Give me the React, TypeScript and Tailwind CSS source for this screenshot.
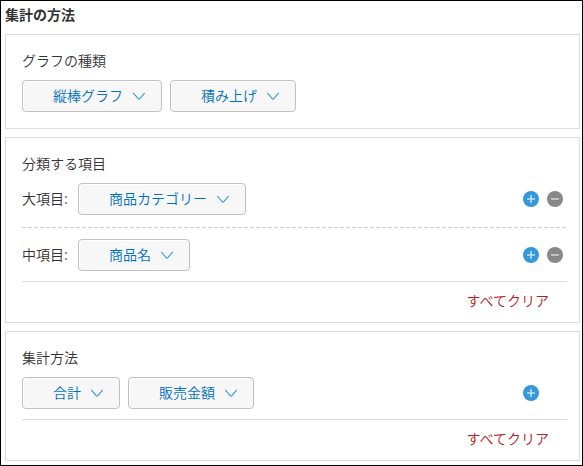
import React from 'react';

interface DropdownProps {
  /** Accessible name of the drop-down */
  label: string;
  /** Text of the selected option */
  value: string;
  id?: string;
}

/** Drop-down with a blue label and a thin chevron */
const Dropdown: React.FC<DropdownProps> = ({ label, value, id }) => (
  <div className="relative">
    <select
      id={id}
      aria-label={label}
      className="block h-8 appearance-none rounded-sm border border-[#c1c1c1] bg-[#f7f7f7] pr-[38px] pb-0.5 pl-[30px] text-sm text-[#0070c0] shadow-[inset_1px_1px_1px_#fff]"
    >
      <option>{value}</option>
    </select>
    <svg
      className="pointer-events-none absolute top-3 right-[17px] h-2 w-3"
      viewBox="0 0 12 8"
      fill="none"
      stroke="#3498db"
      strokeWidth="1.1"
      aria-hidden="true"
    >
      <path d="M0.4 1 L5.2 6.7 Q6 7.6 6.8 6.7 L11.6 1" />
    </svg>
  </div>
);

/** Round button that adds a row */
const AddButton: React.FC = () => (
  <button type="button" aria-label="追加" className="block">
    <svg className="size-4" viewBox="0 0 16 16" aria-hidden="true">
      <circle cx="8" cy="8" r="8" fill="#3498db" />
      <path d="M4 8H12M8 4V12" stroke="#c5e1f5" strokeWidth="1.6" />
    </svg>
  </button>
);

/** Round button that removes a row */
const RemoveButton: React.FC = () => (
  <button type="button" aria-label="削除" className="block">
    <svg className="size-4" viewBox="0 0 16 16" aria-hidden="true">
      <circle cx="8" cy="8" r="8" fill="#888" />
      <path d="M4 8H12" stroke="#d4d4d4" strokeWidth="1.6" />
    </svg>
  </button>
);

interface PanelProps {
  headline: string;
  children: React.ReactNode;
}

const Panel: React.FC<PanelProps> = ({ headline, children }) => (
  <section className="border border-[#dcdcdc] pt-4 pr-3 pl-4">
    <h2 className="mb-[10px] leading-[19px]">{headline}</h2>
    {children}
  </section>
);

/** Footer of a panel with the link that resets all of its rows */
const ClearAll: React.FC = () => (
  <div className="mt-[10px] flex h-[41px] items-center justify-end border-t border-[#dcdcdc] pr-[18px] pb-1">
    <a href="#clear" className="text-[#b3201b]">
      すべてクリア
    </a>
  </div>
);

interface GroupRowProps {
  id: string;
  label: string;
  value: string;
}

const GroupRow: React.FC<GroupRowProps> = ({ id, label, value }) => (
  <div className="flex items-center">
    <label htmlFor={id} className="w-14 pb-0.5">
      {label}
    </label>
    <Dropdown id={id} label={label} value={value} />
    <div className="ml-auto flex gap-2 pr-1">
      <AddButton />
      <RemoveButton />
    </div>
  </div>
);

export default function App() {
  return (
    <main className="border border-black bg-white pr-0.5 pb-1 pl-1 font-['Noto_Sans_CJK_JP',sans-serif] text-sm font-[350] text-[#333]">
      <h1 className="mb-1.5 leading-[27px] font-bold">集計の方法</h1>
      <div className="flex flex-col gap-2">
        <Panel headline="グラフの種類">
          <div className="flex gap-2 pb-4">
            <Dropdown label="グラフの種類" value="縦棒グラフ" />
            <Dropdown label="表示方法" value="積み上げ" />
          </div>
        </Panel>

        <Panel headline="分類する項目">
          <GroupRow id="major" label="大項目:" value="商品カテゴリー" />
          {/* 4px dashes with 2px gaps */}
          <div className="mt-3 mr-px mb-[11px] h-px bg-[repeating-linear-gradient(to_right,#d0d0d0_0_4px,transparent_4px_6px)]" />
          <GroupRow id="middle" label="中項目:" value="商品名" />
          <ClearAll />
        </Panel>

        <Panel headline="集計方法">
          <div className="flex items-center gap-2">
            <Dropdown label="集計方法" value="合計" />
            <Dropdown label="集計する項目" value="販売金額" />
            <div className="ml-auto pr-7">
              <AddButton />
            </div>
          </div>
          <ClearAll />
        </Panel>
      </div>
    </main>
  );
}
